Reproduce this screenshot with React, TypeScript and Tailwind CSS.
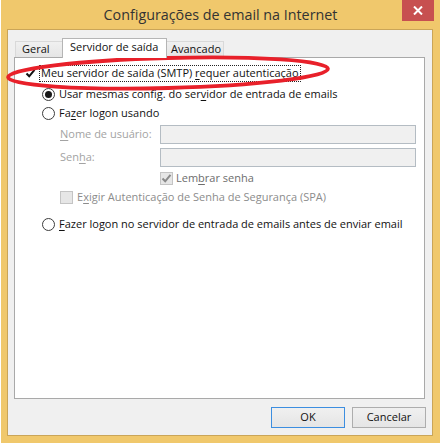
import React from 'react';

const font = { fontFamily: '"Open Sans", "Noto Sans", sans-serif' };

function Mn({ children }: { children: React.ReactNode }) {
  return <span className="underline underline-offset-2">{children}</span>;
}

function Radio({ checked }: { checked?: boolean }) {
  return (
    <span className="flex h-[13px] w-[13px] shrink-0 items-center justify-center rounded-full border border-[#3c3c3c] bg-white">
      {checked && <span className="h-[7px] w-[7px] rounded-full bg-[#1a1a1a]" />}
    </span>
  );
}

function CheckMark({ color }: { color: string }) {
  return (
    <svg width="11" height="11" viewBox="0 0 11 11">
      <path d="M1.5 5.5 L4.2 8.3 L9.5 1.8" fill="none" stroke={color} strokeWidth="2" />
    </svg>
  );
}

function Box({ checked, disabled, border = true }: { checked?: boolean; disabled?: boolean; border?: boolean }) {
  return (
    <span
      className={
        'flex h-[13px] w-[13px] shrink-0 items-center justify-center ' +
        (disabled ? 'border border-[#c4c4c4] bg-[#e6e6e6]' : border ? 'border border-[#e6e6e6] bg-white' : 'bg-white')
      }
    >
      {checked && <CheckMark color={disabled ? '#8a8a8a' : '#111111'} />}
    </span>
  );
}

function Input() {
  return <div className="h-[19px] w-[256px] border border-[#b4bcc3] bg-[#f0f0f0]" />;
}

export default function App() {
  return (
    <div className="h-[445px] w-[441px] bg-white pl-[1px] text-[11px] text-[#111]" style={font}>
      <div className="flex h-[443px] w-[439px] flex-col bg-[#f0c86c]">
        {/* title bar */}
        <div className="relative flex h-[29px] items-center justify-center">
          <span className="text-[14.3px] text-[#333]">Configurações de email na Internet</span>
          <div className="absolute right-[6px] top-0 flex h-[21px] w-[32px] items-center justify-center bg-[#c75050]">
            <svg width="10" height="9" viewBox="0 0 10 9">
              <path d="M1 0.5 L9 8.5 M9 0.5 L1 8.5" stroke="#fff" strokeWidth="2" />
            </svg>
          </div>
        </div>

        {/* client area */}
        <div className="ml-[6px] flex h-[407px] w-[426px] flex-col border border-[#caa558] bg-[#f0f0f0]">
          {/* tabs */}
          <div className="ml-[7px] mt-[8px] flex h-[19px] items-end">
            <div className="flex h-[16px] w-[47px] items-center border-l border-t border-[#d9d9d9] bg-gradient-to-b from-[#f0f0f0] to-[#e5e5e5] pl-[6px]">
              Geral
            </div>
            <div className="relative z-10 -mb-[1px] flex h-[20px] w-[105px] items-center border-l border-r border-t border-[#b5b5b5] bg-white pl-[7px] pb-[2px]">
              Servidor de saída
            </div>
            <div className="flex h-[16px] w-[57px] items-center border-r border-t border-[#d9d9d9] bg-gradient-to-b from-[#f0f0f0] to-[#e5e5e5] pl-[4px]">
              Avancado
            </div>
          </div>

          {/* panel */}
          <div className="relative ml-[6px] flex h-[342px] w-[411px] flex-col border border-[#a9a9a9] bg-white pt-[6px]">
            <div className="flex h-[18px] items-center pl-[9px]">
              <Box checked border={false} />
              <span className="ml-[2px] flex h-[17px] items-center whitespace-pre border border-dotted border-[#222] px-[1px]">
                Meu servidor de saída (SMTP){' '}<Mn>r</Mn>equer autenticação
              </span>
            </div>
            <div className="mt-[3px] flex h-[18px] items-center pl-[27px]">
              <Radio checked />
              <span className="ml-[4px]">
                Usar mesmas config. do ser<Mn>v</Mn>idor de entrada de emails
              </span>
            </div>
            <div className="mt-[1px] flex h-[18px] items-center pl-[27px]">
              <Radio />
              <span className="ml-[4px]">
                Fa<Mn>z</Mn>er logon usando
              </span>
            </div>
            <div className="mt-[3px] flex h-[19px] items-center pl-[45px] text-[#a3a3a3]">
              <span className="w-[100px]">
                <Mn>N</Mn>ome de usuário:
              </span>
              <Input />
            </div>
            <div className="mt-[4px] flex h-[19px] items-center pl-[45px] text-[#a3a3a3]">
              <span className="w-[100px]">
                Sen<Mn>h</Mn>a:
              </span>
              <Input />
            </div>
            <div className="mt-[2px] flex h-[18px] items-center pl-[145px] text-[#8c8c8c]">
              <Box checked disabled />
              <span className="ml-[3px] text-[#6d6d6d]">
                Lem<Mn>b</Mn>rar senha
              </span>
            </div>
            <div className="mt-[1px] flex h-[18px] items-center pl-[45px] text-[#8c8c8c]">
              <Box disabled />
              <span className="ml-[4px]">
                E<Mn>x</Mn>igir Autenticação de Senha de Segurança (SPA)
              </span>
            </div>
            <div className="mt-[9px] flex h-[18px] items-center pl-[27px]">
              <Radio />
              <span className="ml-[4px]">
                <Mn>F</Mn>azer logon no servidor de entrada de emails antes de enviar email
              </span>
            </div>

            {/* hand-drawn highlight */}
            <svg className="pointer-events-none absolute left-[-15px] top-[-58px]" width="360" height="110" viewBox="0 0 360 110">
              <ellipse
                cx="168"
                cy="73"
                rx="160"
                ry="15"
                fill="none"
                stroke="#e8202a"
                strokeWidth="3.8"
                transform="rotate(-1.5 168 73)"
              />
            </svg>
          </div>

          {/* buttons */}
          <div className="mt-[8px] flex justify-end gap-[7px] pr-[6px]">
            <button className="flex h-[21px] w-[74px] items-center justify-center border border-[#3c8ee0] bg-gradient-to-b from-[#f0f0f0] to-[#e5e5e5]">
              OK
            </button>
            <button className="flex h-[21px] w-[74px] items-center justify-center border border-[#adadad] bg-gradient-to-b from-[#f0f0f0] to-[#e5e5e5]">
              Cancelar
            </button>
          </div>
        </div>
      </div>
    </div>
  );
}
